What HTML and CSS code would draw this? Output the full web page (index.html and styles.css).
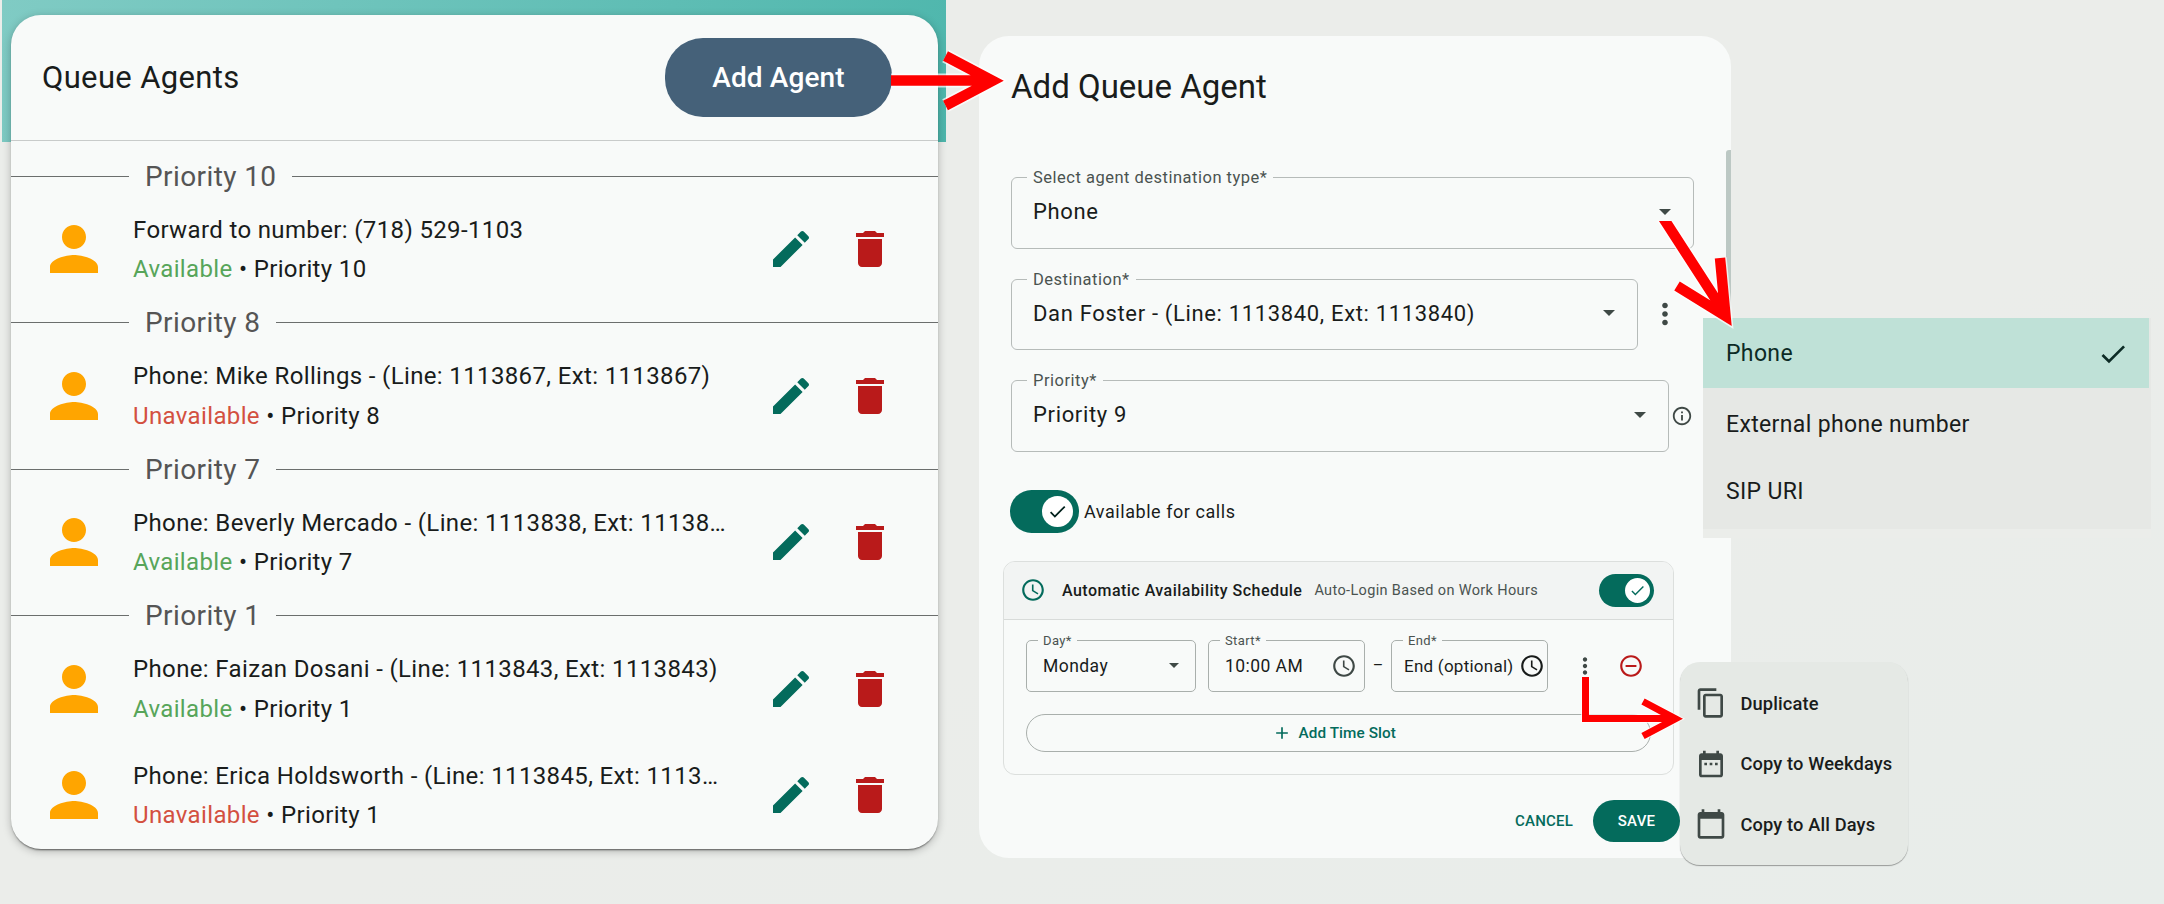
FILE: index.html
```html
<!DOCTYPE html>
<html lang="en">
<head>
  <meta charset="utf-8">
  <title>Queue Agents</title>
  <link rel="stylesheet" href="styles.css">
</head>
<body>
  <!-- Icons -->
  <svg class="sprite" width="0" height="0">
    <symbol id="person" viewBox="0 0 24 24"><path d="M12 12c2.21 0 4-1.79 4-4s-1.79-4-4-4-4 1.79-4 4 1.79 4 4 4zm0 2c-2.67 0-8 1.34-8 4v2h16v-2c0-2.66-5.33-4-8-4z"/></symbol>
    <symbol id="edit" viewBox="0 0 24 24"><path d="M3 17.25V21h3.75L17.81 9.94l-3.75-3.75L3 17.25zM20.71 7.04c.39-.39.39-1.02 0-1.41l-2.34-2.34c-.39-.39-1.02-.39-1.41 0l-1.83 1.83 3.75 3.75 1.83-1.83z"/></symbol>
    <symbol id="delete" viewBox="0 0 24 24"><path d="M6 19c0 1.1.9 2 2 2h8c1.1 0 2-.9 2-2V7H6v12zM19 4h-3.5l-1-1h-5l-1 1H5v2h14V4z"/></symbol>
    <symbol id="check" viewBox="0 0 24 24"><path d="M9 16.17L4.83 12l-1.42 1.41L9 19 21 7l-1.41-1.41z"/></symbol>
    <symbol id="clock" viewBox="0 0 24 24"><path d="M11.99 2C6.47 2 2 6.48 2 12s4.47 10 9.99 10C17.52 22 22 17.52 22 12S17.52 2 11.99 2zM12 20c-4.42 0-8-3.58-8-8s3.58-8 8-8 8 3.58 8 8-3.58 8-8 8zm.5-13H11v6l5.25 3.15.75-1.23-4.5-2.67z"/></symbol>
    <symbol id="info" viewBox="0 0 24 24"><path d="M11 7h2v2h-2zm0 4h2v6h-2zm1-9C6.48 2 2 6.48 2 12s4.48 10 10 10 10-4.48 10-10S17.52 2 12 2zm0 18c-4.41 0-8-3.59-8-8s3.59-8 8-8 8 3.59 8 8-3.59 8-8 8z"/></symbol>
    <symbol id="more" viewBox="0 0 24 24"><path d="M12 8c1.1 0 2-.9 2-2s-.9-2-2-2-2 .9-2 2 .9 2 2 2zm0 2c-1.1 0-2 .9-2 2s.9 2 2 2 2-.9 2-2-.9-2-2-2zm0 6c-1.1 0-2 .9-2 2s.9 2 2 2 2-.9 2-2-.9-2-2-2z"/></symbol>
    <symbol id="remove" viewBox="0 0 24 24"><path d="M7 11v2h10v-2H7zm5-9C6.48 2 2 6.48 2 12s4.48 10 10 10 10-4.48 10-10S17.52 2 12 2zm0 18c-4.41 0-8-3.59-8-8s3.59-8 8-8 8 3.59 8 8-3.59 8-8 8z"/></symbol>
    <symbol id="plus" viewBox="0 0 24 24"><path d="M19 13h-6v6h-2v-6H5v-2h6V5h2v6h6v2z"/></symbol>
    <symbol id="copy" viewBox="0 0 24 24"><path d="M16 1H4c-1.1 0-2 .9-2 2v14h2V3h12V1zm3 4H8c-1.1 0-2 .9-2 2v14c0 1.1.9 2 2 2h11c1.1 0 2-.9 2-2V7c0-1.1-.9-2-2-2zm0 16H8V7h11v14z"/></symbol>
    <symbol id="weekdays" viewBox="0 0 24 24"><path d="M9 11H7v2h2v-2zm4 0h-2v2h2v-2zm4 0h-2v2h2v-2zm2-7h-1V2h-2v2H8V2H6v2H5c-1.11 0-1.99.9-1.99 2L3 20c0 1.1.89 2 2 2h14c1.1 0 2-.9 2-2V6c0-1.1-.9-2-2-2zm0 16H5V9h14v11z"/></symbol>
    <symbol id="alldays" viewBox="0 0 24 24"><path d="M20 3h-1V1h-2v2H7V1H5v2H4c-1.1 0-2 .9-2 2v16c0 1.1.9 2 2 2h16c1.1 0 2-.9 2-2V5c0-1.1-.9-2-2-2zm0 18H4V8h16v13z"/></symbol>
  </svg>

  <!-- Agent list -->
  <section class="queue">
    <div class="card">
      <header class="card-header">
        <h1>Queue Agents</h1>
        <button class="add-agent">Add Agent</button>
      </header>
      <div class="agent-list">
        <div class="divider"><span>Priority 10</span></div>
        <div class="agent">
          <svg class="person"><use href="#person"/></svg>
          <div class="agent-text">
            <div>Forward to number: (718) 529-1103</div>
            <div><span class="available">Available</span> • Priority 10</div>
          </div>
          <svg class="edit"><use href="#edit"/></svg>
          <svg class="delete"><use href="#delete"/></svg>
        </div>

        <div class="divider"><span>Priority 8</span></div>
        <div class="agent">
          <svg class="person"><use href="#person"/></svg>
          <div class="agent-text">
            <div>Phone: Mike Rollings - (Line: 1113867, Ext: 1113867)</div>
            <div><span class="unavailable">Unavailable</span> • Priority 8</div>
          </div>
          <svg class="edit"><use href="#edit"/></svg>
          <svg class="delete"><use href="#delete"/></svg>
        </div>

        <div class="divider"><span>Priority 7</span></div>
        <div class="agent">
          <svg class="person"><use href="#person"/></svg>
          <div class="agent-text">
            <div>Phone: Beverly Mercado - (Line: 1113838, Ext: 11138…</div>
            <div><span class="available">Available</span> • Priority 7</div>
          </div>
          <svg class="edit"><use href="#edit"/></svg>
          <svg class="delete"><use href="#delete"/></svg>
        </div>

        <div class="divider"><span>Priority 1</span></div>
        <div class="agent">
          <svg class="person"><use href="#person"/></svg>
          <div class="agent-text">
            <div>Phone: Faizan Dosani - (Line: 1113843, Ext: 1113843)</div>
            <div><span class="available">Available</span> • Priority 1</div>
          </div>
          <svg class="edit"><use href="#edit"/></svg>
          <svg class="delete"><use href="#delete"/></svg>
        </div>
        <div class="agent">
          <svg class="person"><use href="#person"/></svg>
          <div class="agent-text">
            <div>Phone: Erica Holdsworth - (Line: 1113845, Ext: 1113…</div>
            <div><span class="unavailable">Unavailable</span> • Priority 1</div>
          </div>
          <svg class="edit"><use href="#edit"/></svg>
          <svg class="delete"><use href="#delete"/></svg>
        </div>
      </div>
    </div>
  </section>

  <!-- Add agent dialog -->
  <section class="dialog">
    <h2>Add Queue Agent</h2>
    <div class="field-row">
      <div class="field field-type">
        <label>Select agent destination type*</label>
        <span>Phone</span>
        <i class="caret"></i>
      </div>
    </div>
    <div class="field-row">
      <div class="field field-destination">
        <label>Destination*</label>
        <span>Dan Foster - (Line: 1113840, Ext: 1113840)</span>
        <i class="caret"></i>
      </div>
      <svg class="more"><use href="#more"/></svg>
    </div>
    <div class="field-row">
      <div class="field field-priority">
        <label>Priority*</label>
        <span>Priority 9</span>
        <i class="caret"></i>
      </div>
      <svg class="info"><use href="#info"/></svg>
    </div>

    <div class="available-row">
      <div class="toggle"><div class="thumb"><svg><use href="#check"/></svg></div></div>
      <span>Available for calls</span>
    </div>

    <div class="schedule">
      <div class="schedule-header">
        <svg class="clock-green"><use href="#clock"/></svg>
        <strong>Automatic Availability Schedule</strong>
        <small>Auto-Login Based on Work Hours</small>
        <div class="toggle toggle-small"><div class="thumb"><svg><use href="#check"/></svg></div></div>
      </div>
      <div class="slot">
        <div class="field small day">
          <label>Day*</label>
          <span>Monday</span>
          <i class="caret"></i>
        </div>
        <div class="field small start">
          <label>Start*</label>
          <span>10:00 AM</span>
          <svg class="clock"><use href="#clock"/></svg>
        </div>
        <span class="dash">–</span>
        <div class="field small end">
          <label>End*</label>
          <span>End (optional)</span>
          <svg class="clock"><use href="#clock"/></svg>
        </div>
        <svg class="slot-more"><use href="#more"/></svg>
        <svg class="slot-remove"><use href="#remove"/></svg>
      </div>
      <button class="add-slot"><svg><use href="#plus"/></svg>Add Time Slot</button>
    </div>

    <div class="actions">
      <button class="cancel">CANCEL</button>
      <button class="save">SAVE</button>
    </div>
    <div class="scrollbar"></div>
  </section>

  <!-- Open menus -->
  <div class="type-menu">
    <div class="option selected">Phone<svg><use href="#check"/></svg></div>
    <div class="option">External phone number</div>
    <div class="option last">SIP URI</div>
  </div>

  <div class="slot-menu">
    <div><svg><use href="#copy"/></svg>Duplicate</div>
    <div><svg><use href="#weekdays"/></svg>Copy to Weekdays</div>
    <div><svg><use href="#alldays"/></svg>Copy to All Days</div>
  </div>

  <!-- Arrows between the panels -->
  <svg class="arrows" width="2164" height="904" viewBox="0 0 2164 904">
    <defs>
      <clipPath id="below"><rect x="1600" y="221" width="200" height="140"/></clipPath>
      <g id="arrow1"><path d="M891 80.5H988M945.5 56L992.5 80.8L945.5 105.5"/></g>
      <g id="arrow2"><path d="M1660 213L1724 312M1677 286L1725.5 316L1720 258"/></g>
      <g id="arrow3"><path d="M1585.5 677V718.5H1674M1643 701.5L1675.5 718.8L1643 736"/></g>
    </defs>
    <use href="#arrow1" class="halo" stroke-width="14"/>
    <use href="#arrow1" class="red" stroke-width="10.5"/>
    <g clip-path="url(#below)">
      <use href="#arrow2" class="halo" stroke-width="13.5"/>
      <use href="#arrow2" class="red" stroke-width="10.5"/>
    </g>
    <use href="#arrow3" class="halo" stroke-width="9"/>
    <use href="#arrow3" class="red" stroke-width="7"/>
  </svg>
</body>
</html>
```
FILE: styles.css
```css
* {
  box-sizing: border-box;
}

body {
  margin: 0;
  width: 2164px;
  height: 904px;
  overflow: hidden;
  position: relative;
  display: flex;
  align-items: flex-start;
  background: linear-gradient(160deg, #ebedea 60%, #e8edea 100%);
  font-family: Roboto, sans-serif;
  color: #191c1b;
}

svg {
  display: block;
  flex: none;
  fill: currentColor;
}

.sprite {
  position: absolute;
}

button {
  border: none;
  padding: 0;
  background: none;
  font-family: inherit;
  font-weight: 500;
}

h1,
h2 {
  margin: 0;
  font-weight: 400;
}

/* agent list */
.queue {
  width: 944px;
  height: 904px;
  margin-left: 2px;
  padding: 15px 8px 0 9px;
  background: linear-gradient(115deg, #80cbc4, #4db6ac) no-repeat 0 0 / 944px 142px;
}

.card {
  height: 834px;
  border-radius: 30px;
  background: #f8faf9;
  box-shadow: 0 2px 2px -1px rgba(0, 0, 0, 0.55), 0 2px 8px rgba(0, 0, 0, 0.25);
}

.card-header {
  height: 126px;
  padding: 0 46px 0 31px;
  display: flex;
  align-items: center;
  justify-content: space-between;
  border-bottom: 1px solid #c8cbca;
}

.card-header h1 {
  font-size: 31px;
  letter-spacing: 0.35px;
}

.add-agent {
  width: 227px;
  height: 79px;
  border-radius: 38px;
  margin-top: -1px;
  background: #456179;
  color: #fff;
  font-size: 28px;
  letter-spacing: 0.1px;
}

.agent-list {
  padding-top: 15px;
}

.divider {
  height: 40px;
  display: flex;
  align-items: center;
  gap: 16px;
  font-size: 28px;
  letter-spacing: 0.4px;
  color: #555;
}

.divider::before,
.divider::after {
  content: "";
  height: 1px;
  background: #6b6e6d;
}

.divider::before {
  width: 118px;
}

.divider::after {
  flex: 1;
}

.agent {
  height: 106.5px;
  padding: 0 44px 0 27px;
  display: flex;
  align-items: center;
}

.person {
  width: 72px;
  height: 72px;
  color: #ffa500;
}

.agent-text {
  flex: 1;
  padding: 2px 0 0 23px;
  font-size: 24px;
  line-height: 39.5px;
  letter-spacing: 0.36px;
  white-space: nowrap;
}

.available {
  color: #57a55a;
}

.unavailable {
  color: #d3503f;
}

.edit,
.delete {
  width: 48px;
  height: 48px;
}

.edit {
  color: #046b5c;
}

.delete {
  margin-left: 31px;
  color: #b91a1a;
}

/* dialog */
.dialog {
  position: relative;
  width: 752px;
  height: 822px;
  margin: 36px 0 0 33px;
  padding: 30px 0 0 32px;
  border-radius: 30px 30px 0 30px;
  background: #f8faf9;
}

.dialog h2 {
  height: 111px;
  line-height: 42px;
  font-size: 33px;
  letter-spacing: 0;
}

.field-row {
  display: flex;
  align-items: center;
  margin-bottom: 30px;
}

.field {
  position: relative;
  height: 71.5px;
  padding: 0 22px 2px 21px;
  display: flex;
  align-items: center;
  justify-content: space-between;
  border: 1.5px solid #b6bbb9;
  border-radius: 6px;
  font-size: 22px;
  letter-spacing: 0.66px;
}

.field label {
  position: absolute;
  top: -10px;
  left: 15px;
  padding: 0 6px;
  background: #f8faf9;
  color: #4a5350;
  font-size: 16.5px;
  line-height: 20px;
  letter-spacing: 0.5px;
}

.field-type {
  width: 683px;
}

.field-destination {
  width: 627px;
}

.field-priority {
  width: 658px;
}

.caret {
  border: 6.5px solid transparent;
  border-top-color: #3f4946;
  border-bottom: 0;
}

.more {
  width: 34px;
  height: 34px;
  margin-left: 10px;
  color: #3f4946;
}

.info {
  width: 22px;
  height: 22px;
  margin-left: 2px;
  color: #3f4946;
}

.available-row {
  display: flex;
  align-items: center;
  gap: 5px;
  margin: 38px 0 28px -1px;
  font-size: 18px;
  letter-spacing: 0.55px;
}

.toggle {
  width: 69px;
  height: 43px;
  padding: 0 6px;
  display: flex;
  align-items: center;
  justify-content: flex-end;
  border-radius: 22px;
  background: #046b5c;
}

.thumb {
  width: 31px;
  height: 31px;
  display: flex;
  align-items: center;
  justify-content: center;
  border-radius: 50%;
  background: #fff;
  color: #00201b;
}

.thumb svg {
  width: 21px;
  height: 21px;
}

.toggle-small {
  width: 55px;
  height: 33px;
  margin-left: auto;
  padding: 0 4px;
}

.toggle-small .thumb {
  width: 25px;
  height: 25px;
  color: #046b5c;
}

.toggle-small .thumb svg {
  width: 17px;
  height: 17px;
}

.schedule {
  width: 671px;
  height: 214px;
  margin-left: -8px;
  border: 1px solid #dcdfdd;
  border-radius: 12px;
  overflow: hidden;
}

.schedule-header {
  height: 58px;
  padding: 0 19px 0 16px;
  display: flex;
  align-items: center;
  border-bottom: 1px solid #d8dbd9;
  background: #f2f4f3;
}

.clock-green {
  width: 26px;
  height: 26px;
  color: #046b5c;
}

.schedule-header strong {
  margin-left: 16px;
  font-size: 16px;
  font-weight: 500;
  letter-spacing: 0.47px;
}

.schedule-header small {
  margin-left: 12px;
  color: #4a5350;
  font-size: 14.5px;
  letter-spacing: 0.35px;
}

.slot {
  height: 52px;
  margin: 20px 0 22px 22px;
  display: flex;
  align-items: center;
}

.field.small {
  height: 52px;
  padding: 0 16px;
  border-width: 1px;
  border-color: #a9afac;
  border-radius: 5px;
  font-size: 17.5px;
  letter-spacing: 0.45px;
}

.field.small label {
  top: -9px;
  left: 11px;
  padding: 0 5px;
  font-size: 13px;
  line-height: 17px;
  letter-spacing: 0.4px;
}

.field.small .caret {
  border-width: 5px;
  border-bottom: 0;
}

.field.day {
  width: 170px;
}

.field.start {
  width: 157px;
  margin-left: 12px;
  padding-right: 7px;
}

.field.end {
  width: 157px;
  padding: 0 2px 0 12px;
  font-size: 17px;
  letter-spacing: 0.25px;
}

.clock {
  width: 26px;
  height: 26px;
  color: #3f4946;
}

.end .clock {
  color: #191c1b;
}

.dash {
  width: 26px;
  text-align: center;
  font-size: 16px;
}

.slot-more {
  width: 26px;
  height: 26px;
  margin-left: 24px;
  color: #3f4946;
}

.slot-remove {
  width: 26px;
  height: 26px;
  margin-left: 20px;
  color: #ba1a1a;
}

.add-slot {
  width: 625px;
  height: 38px;
  margin-left: 22px;
  padding-right: 9px;
  display: flex;
  align-items: center;
  justify-content: center;
  gap: 6.5px;
  border: 1px solid #a9afac;
  border-radius: 19px;
  color: #046b5c;
  font-size: 15.3px;
  letter-spacing: 0.1px;
}

.add-slot svg {
  width: 20px;
  height: 20px;
}

.actions {
  height: 42px;
  margin: 25px 51px 0 0;
  display: flex;
  align-items: center;
  justify-content: flex-end;
  gap: 20px;
}

.cancel,
.save {
  font-size: 15px;
  letter-spacing: 0.2px;
}

.cancel {
  color: #046b5c;
}

.save {
  width: 87px;
  height: 42px;
  border-radius: 21px;
  background: #046b5c;
  color: #fff;
}

.scrollbar {
  position: absolute;
  top: 114px;
  right: 0;
  width: 5px;
  height: 170px;
  border-radius: 3px 0 0 0;
  background: #bcc8c4;
}

/* menus lie over the dialog */
.type-menu {
  position: absolute;
  top: 318px;
  left: 1703px;
  width: 448px;
  height: 220px;
  background: linear-gradient(#e6e8e5 211px, #ebedea 211px);
  font-size: 23px;
  letter-spacing: 0.35px;
}

.option {
  height: 71px;
  padding: 1px 20px 0 23px;
  display: flex;
  align-items: center;
  justify-content: space-between;
}

.option.last {
  height: 64px;
}

.option.selected {
  width: 446px;
  height: 70px;
  background: #bfe1d7;
  color: #0c2b25;
}

.option svg {
  width: 32px;
  height: 32px;
}

.slot-menu {
  position: absolute;
  top: 662px;
  left: 1680px;
  width: 228px;
  height: 203px;
  padding: 11px 0 0 15px;
  border-radius: 20px;
  background: #e5e9e5;
  box-shadow: 0 1px 1px rgba(0, 0, 0, 0.35);
  font-size: 18.3px;
  font-weight: 500;
  letter-spacing: 0.12px;
}

.slot-menu div {
  height: 60.5px;
  display: flex;
  align-items: center;
  gap: 13.5px;
}

.slot-menu svg {
  width: 32px;
  height: 32px;
  color: #3f4946;
}

.arrows {
  position: absolute;
  top: 0;
  left: 0;
  fill: none;
}

.halo {
  stroke: rgba(255, 255, 255, 0.7);
}

.red {
  stroke: #f00;
}
```
